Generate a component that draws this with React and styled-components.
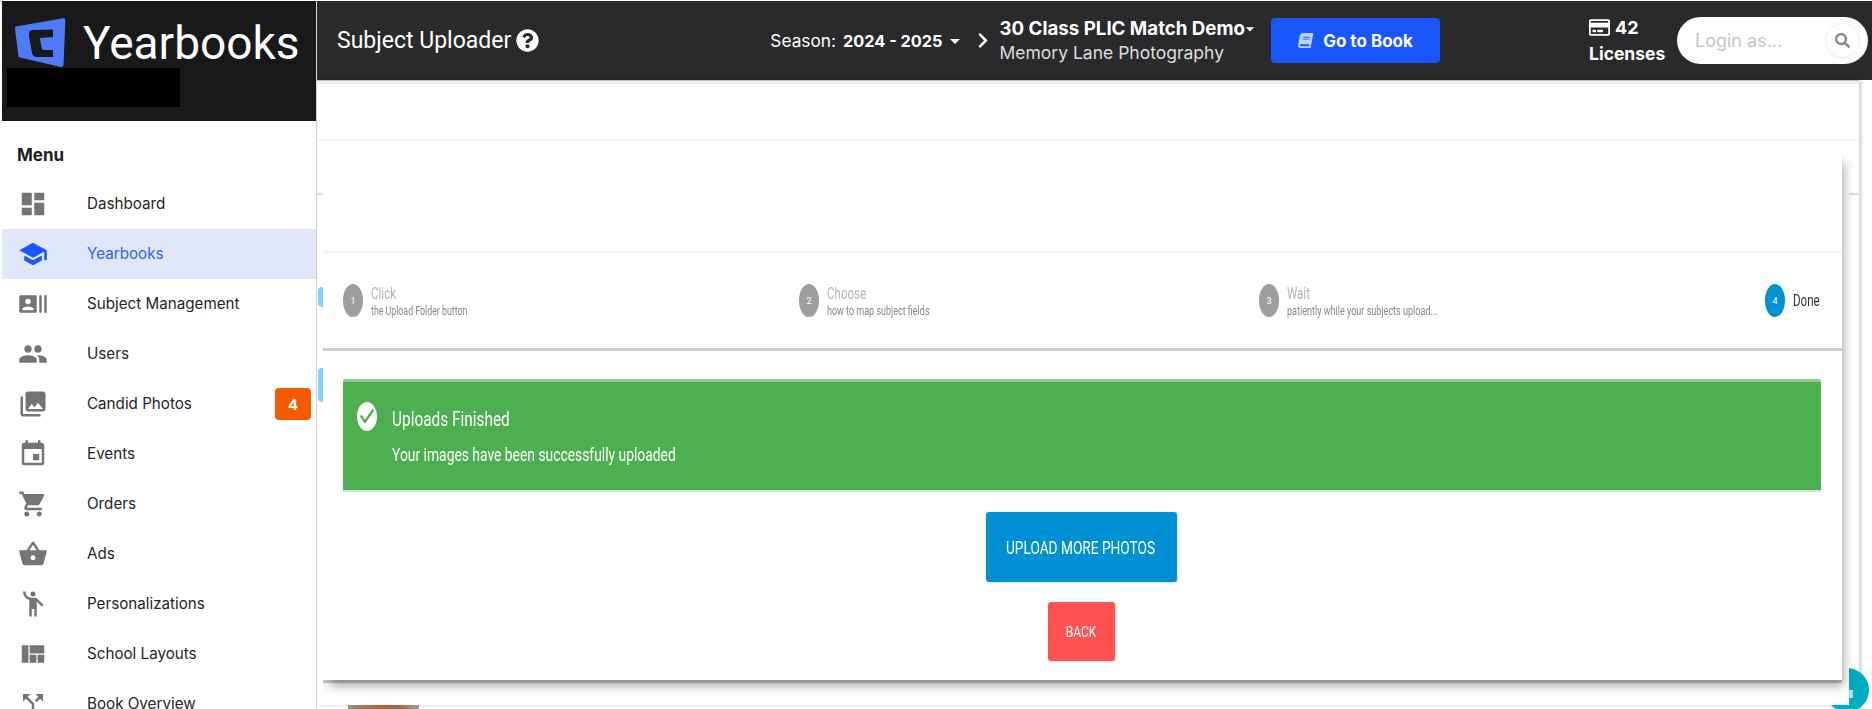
import React from "react";
import styled, { createGlobalStyle } from "styled-components";
import {
  MdDashboard, MdSchool, MdRecentActors, MdPeople, MdPhotoLibrary, MdEvent,
  MdShoppingCart, MdShoppingBasket, MdEmojiPeople, MdViewQuilt, MdCallSplit,
  MdArrowDropDown, MdCheckCircle,
} from "react-icons/md";
import { FaQuestionCircle, FaBook, FaChevronRight, FaSearch, FaRegCreditCard } from "react-icons/fa";

const GlobalStyle = createGlobalStyle`
  html, body {
    margin: 0;
    height: 100%;
    overflow: hidden;
    background: #fff;
    font-family: Inter, "Liberation Sans", sans-serif;
  }
`;

const Shell = styled.div`
  display: flex;
  height: 100vh;
  padding: 1px 0 0 2px;
  box-sizing: border-box;
  overflow: hidden;
`;

const Sidebar = styled.aside`
  width: 314px;
  flex: none;
  border-right: 1px solid #d8d8d8;
  box-sizing: content-box;
  background: #fff;
`;

const Brand = styled.div`
  height: 120px;
  background: #19191b;
  padding: 17px 0 0 13px;
  box-sizing: border-box;
`;

const BrandRow = styled.div`
  display: flex;
  align-items: center;
  gap: 16px;
  height: 50px;
  color: #fff;
  font-family: Roboto, sans-serif;
  font-size: 46px;
  font-weight: 400;
`;

const Redacted = styled.div`
  width: 173px;
  height: 39px;
  margin-left: -8px;
  background: #000;
`;

const MenuTitle = styled.div`
  height: 58px;
  padding: 23px 0 0 15px;
  box-sizing: border-box;
  font-size: 17px;
  font-weight: 700;
  color: #1d1d1f;
  line-height: 22px;
`;

const MenuItem = styled.div`
  display: flex;
  align-items: center;
  height: 50px;
  padding: 0 5px 0 16px;
  background: ${(p) => (p.$active ? "#e0e7fb" : "transparent")};
  color: ${(p) => (p.$active ? "#2f62f5" : "#25262a")};
  font-size: 15.2px;
  svg {
    width: 30px;
    height: 30px;
    flex: none;
    color: ${(p) => (p.$active ? "#1a56ff" : "#757575")};
  }
`;

const MenuLabel = styled.span`
  margin-left: 39px;
  padding-bottom: 2px;
  flex: 1;
`;

const Badge = styled.span`
  width: 36px;
  height: 32px;
  border-radius: 4px;
  background: #f55a03;
  color: #fff;
  font-weight: 700;
  font-size: 15px;
  display: flex;
  align-items: center;
  justify-content: center;
`;

const Main = styled.main`
  flex: 1;
  min-width: 0;
  display: flex;
  flex-direction: column;
`;

const TopBar = styled.header`
  height: 79px;
  flex: none;
  background: #2a2a2c;
  color: #fff;
  display: flex;
  align-items: center;
  padding: 0 4px 0 20px;
`;

const PageTitle = styled.div`
  display: flex;
  align-items: center;
  gap: 5px;
  font-size: 23px;
  font-family: Roboto, sans-serif;
  svg {
    width: 23px;
    height: 23px;
  }
`;

const Season = styled.div`
  display: flex;
  align-items: center;
  margin-left: auto;
  font-size: 17.3px;
  b {
    margin-left: 7px;
    font-size: 16.3px;
  }
`;

const SeasonCaret = styled(MdArrowDropDown)`
  width: 24px;
  height: 24px;
  flex: none;
`;

const Caret = styled(MdArrowDropDown)`
  width: 20px;
  height: 20px;
  margin: 0 -5px;
  flex: none;
`;

const Chevron = styled(FaChevronRight)`
  width: 14px;
  height: 17px;
  margin: 0 10px 0 9px;
`;

const School = styled.div`
  line-height: 24px;
`;

const SchoolName = styled.div`
  display: flex;
  align-items: center;
  font-size: 18.7px;
  font-weight: 700;
`;

const SchoolOwner = styled.div`
  font-size: 17.5px;
  color: #dedede;
`;

const BookButton = styled.button`
  width: 169px;
  height: 45px;
  margin: 0 0 0 16px;
  border: 0;
  border-radius: 4px;
  background: #1a56ff;
  color: #fff;
  font-family: Inter, sans-serif;
  font-size: 17px;
  font-weight: 700;
  display: flex;
  align-items: center;
  justify-content: center;
  gap: 10px;
  svg {
    width: 15px;
    height: 15px;
    color: #bcd0ff;
    transform: skewX(-10deg);
  }
`;

const Licenses = styled.div`
  margin-left: 149px;
  width: 88px;
  font-size: 17.5px;
  font-weight: 700;
  line-height: 26px;
`;

const LicenseCount = styled.div`
  display: flex;
  align-items: center;
  gap: 5px;
  font-size: 18px;
  svg {
    width: 21px;
    height: 21px;
  }
`;

const LoginBox = styled.div`
  width: 191px;
  height: 47px;
  border-radius: 24px;
  background: #fff;
  display: flex;
  align-items: center;
  justify-content: space-between;
  padding: 0 8px 0 18px;
  box-sizing: border-box;
  color: #c8c8c8;
  font-size: 18px;
`;

const SearchButton = styled.span`
  width: 33px;
  height: 33px;
  border: 1px solid #f0f0f0;
  border-radius: 50%;
  display: flex;
  align-items: center;
  justify-content: center;
  color: #8a8a8a;
  svg {
    width: 15px;
    height: 15px;
  }
`;

const Content = styled.div`
  position: relative;
  flex: 1;
  min-height: 0;
  background: #fff;
`;

const Panel = styled.div`
  height: 625px;
  width: 1542px;
  border-top: 1px solid #c4c4c4;
  box-sizing: border-box;
  background: #fff;
  box-shadow: 2px 0 4px rgba(0, 0, 0, 0.2);
  &::before {
    content: "";
    display: block;
    height: 3px;
    background: #efefef;
  }
`;

const PanelHead = styled.div`
  height: 55px;
  border-bottom: 2px solid #f6f6f6;
`;

const PanelRule = styled.div`
  height: 2px;
  margin-top: 52px;
  background: #dcdcdc;
`;

const StepMark = styled.div`
  position: absolute;
  left: 1px;
  top: ${(p) => p.$top}px;
  width: 5px;
  height: ${(p) => p.$height}px;
  border-radius: 4px 0 0 4px;
  background: #81d4fa;
`;

const ChatBubble = styled.div`
  position: absolute;
  left: 1508px;
  top: 588px;
  width: 44px;
  height: 44px;
  border-radius: 50%;
  background: #00acc1;
`;

const ChatGlyph = styled.span`
  position: absolute;
  left: 24px;
  top: 22px;
  width: 4px;
  height: 8px;
  background: #a5e3eb;
`;

const Thumb = styled.div`
  width: 71px;
  height: 6px;
  margin-left: 31px;
  background: linear-gradient(90deg, #9a8d85, #b0683f 40%, #a06a4c 70%, #a59a94);
`;

const ModalFrame = styled.div`
  position: absolute;
  left: 6px;
  top: 73px;
  width: 1526px;
  height: 552px;
  background: #fff;
`;

const Modal = styled.section`
  height: 527px;
  width: 1519px;
  background: #fff;
  box-shadow: 0 3px 1px rgba(0, 0, 0, 0.2), 4px 8px 10px -2px rgba(0, 0, 0, 0.32);
  clip-path: inset(0 -20px -30px 0);
`;

const StepsBar = styled.div`
  height: 100px;
  position: relative;
  top: 98px;
  border-top: 2px solid #f6f6f6;
  border-bottom: 3px solid #cfcfcf;
  box-sizing: border-box;
  display: flex;
  align-items: flex-start;
  padding: 31px 0 0 20px;
`;

const Step = styled.div`
  display: flex;
  width: ${(p) => p.$width}px;
  flex: none;
  align-items: flex-start;
`;

const StepDot = styled.span`
  width: 20px;
  height: 33px;
  border-radius: 50%;
  flex: none;
  background: ${(p) => (p.$current ? "#0091d5" : "#9e9e9e")};
  color: #fff;
  font-size: 9px;
  display: flex;
  align-items: center;
  justify-content: center;
  font-family: Roboto, sans-serif;
`;

const StepText = styled.div`
  margin-left: 8px;
  flex: 1;
  white-space: nowrap;
  font-family: Roboto, sans-serif;
  filter: blur(0.4px);
`;

const StepName = styled.div`
  font-size: 17px;
  line-height: 18px;
  margin-top: ${(p) => (p.$solo ? "7px" : "0")};
  color: ${(p) => (p.$current ? "#333" : "#b5b5b5")};
  transform: scaleX(0.68);
  transform-origin: left;
`;

const StepHint = styled.div`
  font-size: 12px;
  line-height: 12px;
  margin-top: 3px;
  color: #888;
  transform: scaleX(${(p) => p.$squeeze});
  transform-origin: left;
`;

const ModalBody = styled.div`
  display: flex;
  flex-direction: column;
  align-items: center;
  padding: 126px 21px 0 20px;
`;

const Alert = styled.div`
  width: 100%;
  height: 113px;
  box-sizing: border-box;
  background: #4caf50;
  border-top: 3px solid #8fcc92;
  border-bottom: 2px solid #cbe7cc;
  border-radius: 2px;
  display: flex;
  padding: 17px 0 0 12px;
  color: #fff;
  font-family: Roboto, sans-serif;
`;

const AlertIcon = styled(MdCheckCircle)`
  width: 24px;
  height: 35px;
  flex: none;
`;

const AlertText = styled.div`
  margin: 7px 0 0 13px;
  filter: blur(0.4px);
`;

const AlertTitle = styled.div`
  font-size: 20px;
  line-height: 26px;
  transform: scaleX(0.77);
  transform-origin: left;
  white-space: nowrap;
`;

const AlertBody = styled.div`
  font-size: 18px;
  line-height: 22px;
  margin-top: 12px;
  transform: scaleX(0.77);
  transform-origin: left;
  white-space: nowrap;
`;

const ActionButton = styled.button`
  display: flex;
  align-items: center;
  justify-content: center;
  padding: 0;
  border: 0;
  border-radius: 3px;
  color: #fff;
  font-family: Roboto, sans-serif;
  background: ${(p) => p.$bg};
  width: ${(p) => p.$width}px;
  height: ${(p) => p.$height}px;
  margin: ${(p) => p.$gap}px 2px 0 0;
  font-size: ${(p) => p.$size}px;
  box-shadow: 1px 1px 2px rgba(0, 0, 0, 0.15);
  span {
    display: block;
    flex: none;
    filter: blur(0.4px);
    white-space: nowrap;
    transform: scaleX(${(p) => p.$squeeze});
  }
`;

const Logo = () => (
  <svg width="52" height="50" viewBox="0 0 52 50">
    <path
      d="M1 8.5 L48 0.3 Q50.5 0 50.4 2.5 L48.5 47 Q48.4 49.6 46 49 L5 39.6 Q3.6 39.2 3.3 37.8 L0 10.5 Q-0.1 8.8 1 8.5 Z"
      fill="#4f7bf9"
    />
    <path
      d="M17 12 L38 11.5 L38 19 L26 20 Q24.6 20.2 24.9 21.5 L27 31 Q27.2 32 28.4 32 L38 32 L38 39 L22 39 Q18 39 17 35 L14 18 Q13.6 12.6 17 12 Z"
      fill="#19191b"
    />
  </svg>
);

const menu = [
  { label: "Dashboard", Icon: MdDashboard },
  { label: "Yearbooks", Icon: MdSchool, active: true },
  { label: "Subject Management", Icon: MdRecentActors },
  { label: "Users", Icon: MdPeople },
  { label: "Candid Photos", Icon: MdPhotoLibrary, badge: 4 },
  { label: "Events", Icon: MdEvent },
  { label: "Orders", Icon: MdShoppingCart },
  { label: "Ads", Icon: MdShoppingBasket },
  { label: "Personalizations", Icon: MdEmojiPeople },
  { label: "School Layouts", Icon: MdViewQuilt },
  { label: "Book Overview", Icon: MdCallSplit },
];

const steps = [
  { n: 1, name: "Click", hint: "the Upload Folder button", width: 456, squeeze: 0.733 },
  { n: 2, name: "Choose", hint: "how to map subject fields", width: 460, squeeze: 0.75 },
  { n: 3, name: "Wait", hint: "patiently while your subjects upload...", width: 506, squeeze: 0.755 },
];

const App = () => (
  <Shell>
    <GlobalStyle />
    <Sidebar>
      <Brand>
        <BrandRow>
          <Logo />
          Yearbooks
        </BrandRow>
        <Redacted />
      </Brand>
      <MenuTitle>Menu</MenuTitle>
      {menu.map(({ label, Icon, active, badge }) => (
        <MenuItem key={label} $active={active}>
          <Icon />
          <MenuLabel>{label}</MenuLabel>
          {badge && <Badge>{badge}</Badge>}
        </MenuItem>
      ))}
    </Sidebar>
    <Main>
      <TopBar>
        <PageTitle>
          Subject Uploader
          <FaQuestionCircle />
        </PageTitle>
        <Season>
          Season:
          <b>2024 - 2025</b>
          <SeasonCaret />
        </Season>
        <Chevron />
        <School>
          <SchoolName>
            30 Class PLIC Match Demo
            <Caret />
          </SchoolName>
          <SchoolOwner>Memory Lane Photography</SchoolOwner>
        </School>
        <BookButton>
          <FaBook />
          Go to Book
        </BookButton>
        <Licenses>
          <LicenseCount>
            <FaRegCreditCard />
            42
          </LicenseCount>
          Licenses
        </Licenses>
        <LoginBox>
          Login as...
          <SearchButton>
            <FaSearch />
          </SearchButton>
        </LoginBox>
      </TopBar>
      <Content>
        <Panel>
          <PanelHead />
          <PanelRule />
        </Panel>
        <Thumb />
        <StepMark $top={207} $height={20} />
        <StepMark $top={288} $height={34} />
        <ChatBubble>
          <ChatGlyph />
        </ChatBubble>
        <ModalFrame>
          <Modal>
            <StepsBar>
              {steps.map((s) => (
                <Step key={s.n} $width={s.width}>
                  <StepDot>{s.n}</StepDot>
                  <StepText>
                    <StepName>{s.name}</StepName>
                    <StepHint $squeeze={s.squeeze}>{s.hint}</StepHint>
                  </StepText>
                </Step>
              ))}
              <Step $width={60}>
                <StepDot $current>4</StepDot>
                <StepText>
                  <StepName $current $solo>Done</StepName>
                </StepText>
              </Step>
            </StepsBar>
            <ModalBody>
              <Alert>
                <AlertIcon preserveAspectRatio="none" />
                <AlertText>
                  <AlertTitle>Uploads Finished</AlertTitle>
                  <AlertBody>Your images have been successfully uploaded</AlertBody>
                </AlertText>
              </Alert>
              <ActionButton $bg="#0091d5" $width={191} $height={70} $gap={20} $size={19} $squeeze={0.72}>
                <span>UPLOAD MORE PHOTOS</span>
              </ActionButton>
              <ActionButton $bg="#ff5252" $width={67} $height={59} $gap={20} $size={15} $squeeze={0.8}>
                <span>BACK</span>
              </ActionButton>
            </ModalBody>
          </Modal>
        </ModalFrame>
      </Content>
    </Main>
  </Shell>
);

export default App;
